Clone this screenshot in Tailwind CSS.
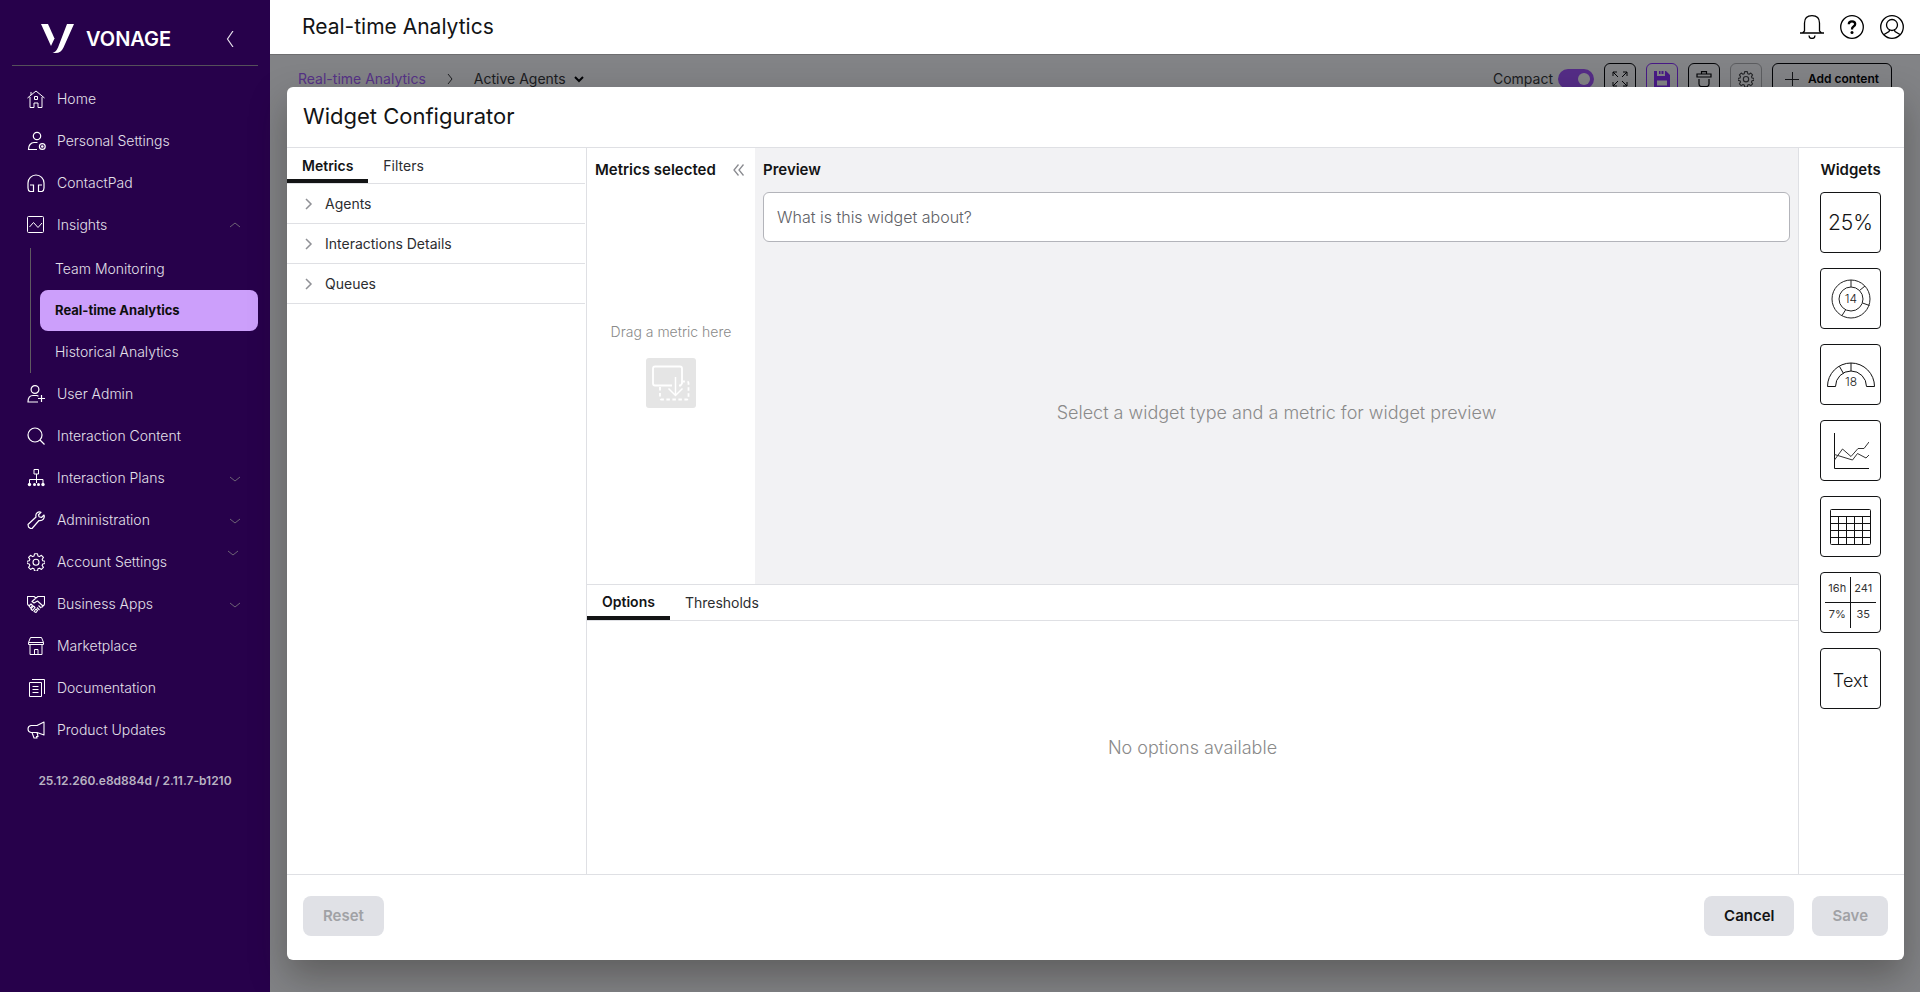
<!DOCTYPE html>
<html lang="en">
<head>
    <meta charset="UTF-8">
    <meta name="viewport" content="width=device-width, initial-scale=1.0">
    <title>Real-time Analytics</title>
    <script src="https://cdn.jsdelivr.net/npm/@tailwindcss/browser@4"></script>
</head>
<body class="font-['Inter',sans-serif] text-sm text-[#131415] bg-white h-screen flex overflow-hidden">

    <!-- Sidebar -->
    <aside class="w-[270px] shrink-0 bg-[#27014b] text-[#e4e0ea] text-sm font-light px-3 flex flex-col">
        <div class="h-[66px] border-b border-[#55505a] flex items-center pt-3 pl-[29px] pr-6">
            <svg class="w-[33px] h-[29px]" viewBox="0 0 33 29" fill="#fff"><path d="M0 0h7l6.500 14.500L10 22z"/><path d="M26 0h7L22.500 23.500Q20 29 14.500 29h-3Q15 28 17 23.500z" /></svg>
            <span class="ml-3 text-xl font-semibold text-white">VONAGE</span>
            <button class="ml-auto" aria-label="Collapse menu">
                <svg class="w-2 h-4" viewBox="0 0 8 16" fill="none" stroke="#e5e0ea" stroke-width="1.200"><path d="M7 0L1.500 8 7 16"/></svg>
            </button>
        </div>

        <nav class="pt-3 flex flex-col">
            <a href="#" class="h-[42px] flex items-center gap-3 pl-[15px] pr-[17px]">
                <svg class="w-[18px] h-[18px]" viewBox="0 0 18 18" fill="none" stroke="#fff"><path d="M.5 8L9 1l8.500 7M3 7v10.500h4V13h4v4.500h4V7M4 5V2M7.500 6.500h3v3h-3z"/></svg>
                <span>Home</span>
            </a>
            <a href="#" class="h-[42px] flex items-center gap-3 pl-[15px] pr-[17px]">
                <svg class="w-[18px] h-[18px] overflow-visible" viewBox="0 0 18 18" fill="none" stroke="#fff" stroke-width="1.200"><circle cx="10" cy="4" r="3.700"/><path d="M10 17.500H1.500c-.3-4 2.500-7 5.500-7h3.500"/><circle cx="15.300" cy="14.500" r="2.900"/><circle cx="15.300" cy="14.500" r=".7"/></svg>
                <span>Personal Settings</span>
            </a>
            <a href="#" class="h-[42px] flex items-center gap-3 pl-[15px] pr-[17px]">
                <svg class="w-[18px] h-[18px]" viewBox="0 0 18 18" fill="none" stroke="#fff" stroke-width="1.200"><path d="M3 11h3.500v6.500H3.200Q1 17 1 14V9a8 8 0 0 1 16 0v5q0 3-2.200 3.500H11.500V11H15"/></svg>
                <span>ContactPad</span>
            </a>
            <a href="#" class="h-[42px] flex items-center gap-3 pl-[15px] pr-[17px]">
                <svg class="w-[18px] h-[18px]" viewBox="0 0 18 18" fill="none" stroke="#fff"><rect x=".5" y=".5" width="16" height="16" rx="1"/><path d="M2.500 11l4-4.500 4.500 5 4-4.500"/></svg>
                <span>Insights</span>
                <svg class="ml-auto w-3 h-2" viewBox="0 0 12 8" fill="none" stroke="#6d6375"><path d="M1 6l5-4 5 4"/></svg>
            </a>
            <div class="mt-[2px] ml-[18px] border-l border-[#5f5a60] pl-[9px] flex flex-col">
                <a href="#" class="h-[42px] flex items-center pl-[15px]">Team Monitoring</a>
                <a href="#" class="h-[41px] flex items-center pl-[15px] rounded-lg bg-[#cc9ffb] text-[#0e0e0e] text-[13px] font-bold">Real-time Analytics</a>
                <a href="#" class="h-[42px] flex items-center pl-[15px]">Historical Analytics</a>
            </div>
            <a href="#" class="h-[42px] flex items-center gap-3 pl-[15px] pr-[17px]">
                <svg class="w-[18px] h-[18px]" viewBox="0 0 18 18" fill="none" stroke="#fff" stroke-width="1.200"><circle cx="8" cy="4.500" r="3.900"/><path d="M11 17H1c0-4 2-6.500 5-6.500h4l1.500.8M14.500 10v7M11 13.500h7"/></svg>
                <span>User Admin</span>
            </a>
            <a href="#" class="h-[42px] flex items-center gap-3 pl-[15px] pr-[17px]">
                <svg class="w-[18px] h-[18px]" viewBox="0 0 18 18" fill="none" stroke="#fff" stroke-width="1.200"><circle cx="8" cy="8" r="7"/><path d="M13 13l4.500 4.500"/></svg>
                <span>Interaction Content</span>
            </a>
            <a href="#" class="h-[42px] flex items-center gap-3 pl-[15px] pr-[17px]">
                <svg class="w-[18px] h-[18px]" viewBox="0 0 18 18" fill="none" stroke="#fff"><path d="M7 .5h4.500V5H7zM9.500 5v9M2.500 14v-3.500h13.500V14"/><g fill="#fff" stroke="none"><circle cx="2.500" cy="15.500" r="1.700"/><circle cx="7.500" cy="15.500" r="1.500"/><circle cx="11.500" cy="15.500" r="1.500"/><circle cx="16" cy="15.500" r="1.700"/></g></svg>
                <span>Interaction Plans</span>
                <svg class="ml-auto w-3 h-2" viewBox="0 0 12 8" fill="none" stroke="#6d6375"><path d="M1 3l5 4 5-4"/></svg>
            </a>
            <a href="#" class="h-[42px] flex items-center gap-3 pl-[15px] pr-[17px]">
                <svg class="w-[18px] h-[18px]" viewBox="0 0 18 18" fill="none" stroke="#fff" stroke-width="1.200" stroke-linejoin="round"><path d="M14 1.300c-2.500-1.200-6 .8-5 4.700L1 13.500l.5 2.500 2 1.500h1.500L12 9.500c4 .5 6-2.500 5-5.500l-2.500 2.500-2.500-.8-.5-2z"/></svg>
                <span>Administration</span>
                <svg class="ml-auto w-3 h-2" viewBox="0 0 12 8" fill="none" stroke="#6d6375"><path d="M1 3l5 4 5-4"/></svg>
            </a>
            <a href="#" class="h-[42px] flex items-center gap-3 pl-[15px] pr-[19px]">
                <svg class="w-[18px] h-[18px]" viewBox="0 0 24 24" fill="none" stroke="#fff" stroke-width="1.500" stroke-linejoin="round"><path d="M10 1h4l.6 3 2 .8 2.600-1.700 2.700 2.700-1.700 2.600.8 2 3 .6v3l-3 .6-.8 2 1.700 2.600-2.700 2.700-2.600-1.700-2 .8-.6 3h-4l-.6-3-2-.8-2.600 1.700-2.700-2.700 1.700-2.600-.8-2L0 14v-3l3-.6.8-2-1.700-2.600 2.700-2.700 2.600 1.700 2-.8z"/><circle cx="12" cy="12.300" r="4"/></svg>
                <span>Account Settings</span>
                <svg class="ml-auto self-start mt-2 w-3 h-2" viewBox="0 0 12 8" fill="none" stroke="#6d6375"><path d="M1 2l5 4 5-4"/></svg>
            </a>
            <a href="#" class="h-[42px] flex items-center gap-3 pl-[15px] pr-[17px]">
                <svg class="w-[18px] h-[18px]" viewBox="0 0 18 18" fill="none" stroke="#fff" stroke-width="1.100" stroke-linejoin="round"><path d="M.5 9.500V1.500H7L9 3l2-1.500h6.500V9.500M.5 9.500l2 1.500M17.500 9.500l-3 3M9 3L5 6.500l2 1.500 3.500-2L16 11M14 13l-2.500-2.500M12.500 15L10 12.500M2 11l2-2 1.500 1.500-2 2.500zM4 14l2.500-3L8 12.500 5.500 15.500zM7 16.500l2-2.500 1.500 1.500L9 17.500z"/></svg>
                <span>Business Apps</span>
                <svg class="ml-auto w-3 h-2" viewBox="0 0 12 8" fill="none" stroke="#6d6375"><path d="M1 3l5 4 5-4"/></svg>
            </a>
            <a href="#" class="h-[42px] flex items-center gap-3 pl-[15px] pr-[17px]">
                <svg class="w-[18px] h-[18px]" viewBox="0 0 18 18" fill="none" stroke="#fff"><path d="M3.500.5h11l2 5v2H1.500v-2zM1.500 5.500h15M3 7.500v10h12v-10M7.500 17.500v-5h3.500v5"/></svg>
                <span>Marketplace</span>
            </a>
            <a href="#" class="h-[42px] flex items-center gap-3 pl-[15px] pr-[17px]">
                <svg class="w-[18px] h-[18px]" viewBox="0 0 18 18" fill="none" stroke="#fff"><path d="M5 .5h12.500V15M2.500 3.500h12v14h-12zM5.500 7.500h6M5.500 10.500h6M5.500 13.500h6"/></svg>
                <span>Documentation</span>
            </a>
            <a href="#" class="h-[42px] flex items-center gap-3 pl-[15px] pr-[17px]">
                <svg class="w-[18px] h-[18px]" viewBox="0 0 18 18" fill="none" stroke="#fff" stroke-width="1.100" stroke-linejoin="round"><path d="M17 1v13l-7-2.500H4Q1 11 1 8t3-3.500h6zM5 11.500l2 5.500h3l-.5-1.500H11l-1-4"/></svg>
                <span>Product Updates</span>
            </a>
        </nav>
        <p class="mt-[22px] text-center text-xs font-semibold text-[#b9b4c2]">25.12.260.e8d884d / 2.11.7-b1210</p>
    </aside>

    <div class="flex-1 min-w-0 flex flex-col">
        <!-- Top bar -->
        <header class="h-[54px] shrink-0 flex items-center justify-between pl-8 pr-4">
            <h1 class="text-[21px]">Real-time Analytics</h1>
            <div class="flex gap-4">
                <button aria-label="Notifications">
                    <svg class="w-6 h-6" viewBox="0 0 24 24" fill="none" stroke="#000" stroke-width="1.300"><path d="M0 18h24M2.500 18l2-2V8Q4.500.7 12 .7T19.500 8v8l2 2M9 20.500a3 3 0 0 0 6 0"/></svg>
                </button>
                <button aria-label="Help">
                    <svg class="w-6 h-6" viewBox="0 0 24 24" fill="none" stroke="#000"><circle cx="12" cy="12" r="11.300" stroke-width="1.300"/><path d="M8.800 9.300q0-3 3.200-3t3.200 2.700q0 1.500-1.700 2.500T12 14.500" stroke-width="2.300"/><circle cx="12" cy="17.500" r="1.500" fill="#000" stroke="none"/></svg>
                </button>
                <button aria-label="Account">
                    <svg class="w-6 h-6" viewBox="0 0 24 24" fill="none" stroke="#000" stroke-width="1.300"><circle cx="12" cy="12" r="11.300"/><circle cx="12" cy="10" r="5.500"/><path d="M4 19.500l5-3 .8-2M20 19.500l-5-3-.8-2"/></svg>
                </button>
            </div>
        </header>

        <main class="relative flex-1 min-h-0 border-t border-[#6e6e70]">
            <!-- Dashboard toolbar -->
            <div class="flex items-center h-12 pl-7 pr-7">
                <a href="#" class="text-[#a65cff]">Real-time Analytics</a>
                <svg class="mx-5 w-2 h-3" viewBox="0 0 8 12" fill="none" stroke="#333"><path d="M2 1l4 5-4 5"/></svg>
                <button class="flex items-center gap-2 text-[#333]">Active Agents
                    <svg class="w-[10px] h-[7px]" viewBox="0 0 10 7" fill="none" stroke="#000" stroke-width="2"><path d="M1 1l4 4 4-4"/></svg>
                </button>
                <div class="ml-auto flex items-center gap-[10px]">
                    <label class="flex items-center gap-[5px] text-[#333]">Compact
                        <input type="checkbox" checked class="peer sr-only">
                        <span class="w-9 h-5 rounded-full bg-[#a350ff] flex items-center justify-end p-1"><span class="size-3 rounded-full bg-white"></span></span>
                    </label>
                    <button class="size-8 border border-black rounded-md flex items-center justify-center" aria-label="Full screen">
                        <svg class="size-4" viewBox="0 0 16 16" fill="none" stroke="#000"><path d="M1 5V1h4M11 1h4v4M15 11v4h-4M5 15H1v-4M1 1l5 5M15 1l-5 5M15 15l-5-5M1 15l5-5"/></svg>
                    </button>
                    <button class="size-8 border border-[#8b2bff] rounded-md flex items-center justify-center" aria-label="Save dashboard">
                        <svg class="size-4" viewBox="0 0 16 16" fill="#8b2bff"><path fill-rule="evenodd" d="M0 0h3v5h8V0h1l4 4v12H0zM3 9.500v5h10v-5zM5 0h1.500v3H5zM7.500 0h2v3h-2z"/></svg>
                    </button>
                    <button class="size-8 border border-black rounded-md flex items-center justify-center" aria-label="Delete">
                        <svg class="size-4" viewBox="0 0 16 16" fill="none" stroke="#000" stroke-width="1.200"><path d="M5.500 3V.6h5V3M1 3h14v3H1zM3 8v5q0 2.500 2.500 2.500h5Q13 15.500 13 13V8"/></svg>
                    </button>
                    <button class="size-8 border border-[#b3b3b3] rounded-md flex items-center justify-center" aria-label="Settings">
                        <svg class="size-4" viewBox="0 0 24 24" fill="none" stroke="#444" stroke-width="1.700" stroke-linejoin="round"><path d="M10 1h4l.6 3 2 .8 2.600-1.700 2.700 2.700-1.700 2.600.8 2 3 .6v3l-3 .6-.8 2 1.700 2.600-2.700 2.700-2.600-1.700-2 .8-.6 3h-4l-.6-3-2-.8-2.600 1.700-2.700-2.700 1.700-2.600-.8-2L0 14v-3l3-.6.8-2-1.700-2.600 2.700-2.700 2.600 1.700 2-.8z"/><circle cx="12" cy="12.300" r="4"/></svg>
                    </button>
                    <button class="h-8 px-3 border border-black rounded-md flex items-center gap-[9px] text-xs font-semibold text-black">
                        <svg class="w-[14px] h-[14px]" viewBox="0 0 14 14" stroke="#222"><path d="M7.500 0v14M0 7.500h14"/></svg>
                        Add content
                    </button>
                </div>
            </div>

            <!-- Modal -->
            <div class="absolute inset-0 bg-[#06080e]/50 pt-8 pb-8 pl-[17px] pr-4">
                <section role="dialog" aria-label="Widget Configurator" class="h-full bg-white rounded-md shadow-[0_16px_36px_rgba(30,25,20,0.35)] flex flex-col">
                    <header class="h-[61px] shrink-0 px-4 flex items-center border-b border-[#dfe0e4]">
                        <h2 class="text-[22px]">Widget Configurator</h2>
                    </header>

                    <div class="flex-1 min-h-0 flex">
                        <!-- Metric list -->
                        <div class="w-[300px] shrink-0 border-r border-[#dfe0e4] pr-px">
                            <div role="tablist" class="h-9 flex border-b border-[#dfe0e4]">
                                <button role="tab" aria-selected="true" class="px-[15px] pt-1 font-semibold border-b-4 border-[#131415]">Metrics</button>
                                <button role="tab" aria-selected="false" class="px-[15px] text-[#2c2d30]">Filters</button>
                            </div>
                            <button class="w-full h-10 flex items-center gap-3 pl-4 border-b border-[#dfe0e4] text-[#2c2d30]">
                                <svg class="w-[10px] h-3" viewBox="0 0 10 12" fill="none" stroke="#909196" stroke-width="1.500"><path d="M3 1l5 5-5 5"/></svg>
                                Agents
                            </button>
                            <button class="w-full h-10 flex items-center gap-3 pl-4 border-b border-[#dfe0e4] text-[#2c2d30]">
                                <svg class="w-[10px] h-3" viewBox="0 0 10 12" fill="none" stroke="#909196" stroke-width="1.500"><path d="M3 1l5 5-5 5"/></svg>
                                Interactions Details
                            </button>
                            <button class="w-full h-10 flex items-center gap-3 pl-4 border-b border-[#dfe0e4] text-[#2c2d30]">
                                <svg class="w-[10px] h-3" viewBox="0 0 10 12" fill="none" stroke="#909196" stroke-width="1.500"><path d="M3 1l5 5-5 5"/></svg>
                                Queues
                            </button>
                        </div>

                        <div class="flex-1 min-w-0 flex flex-col">
                            <div class="h-[436px] shrink-0 flex">
                                <!-- Drop area -->
                                <div class="w-[168px] shrink-0 flex flex-col">
                                    <div class="h-11 flex items-center justify-between pl-2 pr-[11px]">
                                        <h3 class="text-[15px] font-semibold">Metrics selected</h3>
                                        <button aria-label="Collapse">
                                            <svg class="w-[11px] h-3" viewBox="0 0 11 12" fill="none" stroke="#8a8b90" stroke-width="1.300"><path d="M5.500.5L1 6l4.500 5.500M10.500.5L6 6l4.500 5.500"/></svg>
                                        </button>
                                    </div>
                                    <div class="flex-1 flex flex-col items-center justify-center gap-4 pb-[46px] text-[#8a8a8a]">
                                        <span class="font-light">Drag a metric here</span>
                                        <svg class="w-[50px] h-[50px]" viewBox="0 0 50 50" fill="none" stroke="#fff" stroke-width="1.800"><rect width="50" height="50" rx="3" fill="#e5e5e5" stroke="none"/><path d="M26 27.500H9q-2 0-2-2V10.500q0-2 2-2h25q2 0 2 2v15l-1.500 2H33"/><path d="M29.500 19v18M22.500 30.500l7 7 7-7" stroke-width="1.500"/><path d="M14 29v11q0 1.500 1.500 1.500H41q1.500 0 1.500-1.500V25q0-1.500-1.500-1.500h-4" stroke-dasharray="3.500 2.500"/></svg>
                                    </div>
                                </div>
                                <!-- Preview -->
                                <div class="flex-1 min-w-0 bg-[#f2f2f4] px-2 flex flex-col">
                                    <h3 class="h-11 shrink-0 flex items-center text-[15px] font-semibold">Preview</h3>
                                    <input type="text" aria-label="Widget title" placeholder="What is this widget about?" class="h-[50px] w-full bg-white border border-[#b3b4ba] rounded-md px-[13px] text-base font-light placeholder:text-[#606166]">
                                    <p class="flex-1 flex items-center justify-center text-lg font-light text-[#8a8a8a]">Select a widget type and a metric for widget preview</p>
                                </div>
                            </div>
                            <!-- Options -->
                            <div role="tablist" class="h-[37px] shrink-0 flex border-y border-[#dfe0e4]">
                                <button role="tab" aria-selected="true" class="px-[15px] pt-[3px] font-semibold border-b-4 border-[#131415]">Options</button>
                                <button role="tab" aria-selected="false" class="px-[15px] text-[#2c2d30]">Thresholds</button>
                            </div>
                            <p class="flex-1 flex items-center justify-center text-lg font-light text-[#8a8a8a]">No options available</p>
                        </div>

                        <!-- Widget types -->
                        <div class="w-[106px] shrink-0 border-l border-[#dfe0e4] pr-[2px] flex flex-col items-center gap-[15px]">
                            <h3 class="h-11 -mb-[15px] flex items-center text-[15px] font-semibold">Widgets</h3>
                            <button class="size-[61px] border border-[#131415] rounded-sm text-[21px] font-light">25%</button>
                            <button class="size-[61px] border border-[#131415] rounded-sm flex items-center justify-center" aria-label="Donut chart">
                                <svg class="size-10" viewBox="0 0 40 40" fill="none" stroke="#222"><circle cx="20" cy="20" r="19"/><circle cx="20" cy="20" r="12"/><path d="M20 1v7M28.500 11.500L34 7M31.500 24l7 2.500M14.500 31L11 36.500"/><text x="20" y="24" font-size="12" font-weight="300" text-anchor="middle" fill="#222" stroke="none">14</text></svg>
                            </button>
                            <button class="size-[61px] border border-[#131415] rounded-sm flex items-center justify-center" aria-label="Gauge chart">
                                <svg class="w-12 h-[30px]" viewBox="0 0 48 30" fill="none" stroke="#111"><path d="M.5 26.500a23.300 23.300 0 0 1 47 0h-8a15 15 0 0 0-31 0zM24 3v8M12.500 6.500l4 7"/><text x="24" y="26" font-size="12" font-weight="300" text-anchor="middle" fill="#222" stroke="none">18</text></svg>
                            </button>
                            <button class="size-[61px] border border-[#131415] rounded-sm flex items-center justify-center" aria-label="Line chart">
                                <svg class="w-9 h-9" viewBox="0 0 36 36" fill="none" stroke="#111"><path d="M1.500 0v35.500H36"/><path stroke="#333" d="M1.500 27l8-11 8.500 7.500 7-8h6l5-6.500M1.500 21.500l18 5.500 5-6.500L33 25l3-3"/></svg>
                            </button>
                            <button class="size-[61px] border border-[#131415] rounded-sm flex items-center justify-center" aria-label="Table">
                                <svg class="w-[41px] h-9" viewBox="0 0 41 36" fill="none" stroke="#111"><rect x=".5" y=".5" width="40" height="35" rx="1"/><path d="M0 7.500h41M0 14.500h41M0 21.500h41M0 28.500h41M8.500 7v29M16.500 7v29M24.500 7v29M32.500 7v29"/></svg>
                            </button>
                            <button class="size-[61px] border border-[#131415] rounded-sm p-1 grid grid-cols-2 grid-rows-2 text-[11px] text-[#333]">
                                <span class="border-r border-b border-[#131415] flex items-center justify-center">16h</span>
                                <span class="border-b border-[#131415] flex items-center justify-center">241</span>
                                <span class="border-r border-[#131415] flex items-center justify-center">7%</span>
                                <span class="flex items-center justify-center">35</span>
                            </button>
                            <button class="size-[61px] border border-[#131415] rounded-sm text-lg font-light pt-1">Text</button>
                        </div>
                    </div>

                    <footer class="shrink-0 border-t border-[#dfe0e4] pt-[21px] pb-6 px-4 flex items-center text-[15px] font-semibold">
                        <button disabled class="h-10 px-5 rounded-lg bg-[#e0e1e6] text-[#a0a1a5]">Reset</button>
                        <button class="ml-auto h-10 px-5 rounded-lg bg-[#e0e1e6]">Cancel</button>
                        <button disabled class="ml-[18px] h-10 px-5 rounded-lg bg-[#e0e1e6] text-[#a0a1a5]">Save</button>
                    </footer>
                </section>
            </div>
        </main>
    </div>
</body>
</html>
